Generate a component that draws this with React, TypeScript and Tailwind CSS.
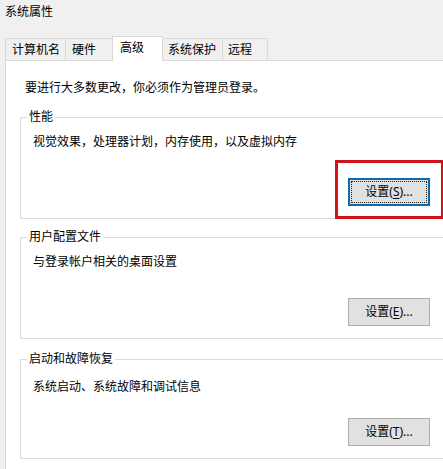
import type { ReactNode } from "react";

const tabs = [
  { name: "计算机名", cls: "w-[60px] h-[22px] border-l border-t pl-[6px]" },
  { name: "硬件", cls: "w-[47px] h-[22px] border-l border-t pl-[6px]" },
  { name: "高级", cls: "w-[51px] h-[25px] -mb-px border-l border-t border-r bg-white pl-[7px] pb-[3px] z-10" },
  { name: "系统保护", cls: "w-[59px] h-[22px] border-t pl-[5px]" },
  { name: "远程", cls: "w-[46px] h-[22px] border-l border-t border-r pl-[5px]" },
];

const SettingsButton = ({ hotkey, focused }: { hotkey: string; focused?: boolean }) => (
  <button
    className={`relative w-[82px] h-[28px] bg-[#e1e1e1] text-[12px] leading-[16px] text-black flex items-center justify-center ${
      focused ? "border-2 border-[#1169ad]" : "border border-[#adadad]"
    }`}
  >
    {focused && <span className="absolute inset-px border border-dotted border-[#222]" />}
    <span>
      设置(<span className="underline underline-offset-2">{hotkey}</span>)...
    </span>
  </button>
);

type GroupProps = {
  title: string;
  text: string;
  textGap?: string;
  buttonGap?: string;
  children: ReactNode;
};

const Group = ({ title, text, textGap = "mt-[9px]", buttonGap = "mt-[28px]", children }: GroupProps) => (
  <fieldset className="relative w-[440px] border border-[#dcdcdc] pb-[12px]">
    <legend className="ml-[6px] px-[2px] leading-[16px]">{title}</legend>
    <div className={`pl-[12px] leading-[16px] ${textGap}`}>{text}</div>
    <div className={`flex justify-end pr-[29px] ${buttonGap}`}>{children}</div>
  </fieldset>
);

export default function App() {
  return (
    <div
      className="w-[443px] h-[469px] bg-[#f0f0f0] overflow-hidden text-[12px] text-black"
      style={{ fontFamily: '"Noto Sans", "Noto Sans CJK SC", sans-serif' }}
    >
      <div className="h-[36px] pl-[5px] pt-[4px] leading-[16px]">系统属性</div>

      <div className="relative flex items-end h-[24px] pl-[5px]">
        {tabs.map((t) => (
          <div
            key={t.name}
            className={`relative flex items-center leading-[16px] border-[#d9d9d9] ${t.cls}`}
          >
            {t.name}
          </div>
        ))}
      </div>

      <div className="ml-[5px] w-[460px] h-[420px] bg-white border-l border-t border-[#d9d9d9] px-[14px]">
        <div className="pt-[19px] pl-[5px] leading-[16px]">要进行大多数更改，你必须作为管理员登录。</div>

        <div className="mt-[13px] relative">
          <Group title="性能" text="视觉效果，处理器计划，内存使用，以及虚拟内存">
            <SettingsButton hotkey="S" focused />
          </Group>
          {/* red highlight box */}
          <div className="absolute left-[315px] top-[51px] w-[109px] h-[59px] border-[3px] border-[#d0121b]" />
        </div>

        <div className="mt-[10px]">
          <Group title="用户配置文件" text="与登录帐户相关的桌面设置">
            <SettingsButton hotkey="E" />
          </Group>
        </div>

        <div className="mt-[12px]">
          <Group
            title="启动和故障恢复"
            text="系统启动、系统故障和调试信息"
            textGap="mt-[12px]"
            buttonGap="mt-[23px]"
          >
            <SettingsButton hotkey="T" />
          </Group>
        </div>
      </div>
    </div>
  );
}
